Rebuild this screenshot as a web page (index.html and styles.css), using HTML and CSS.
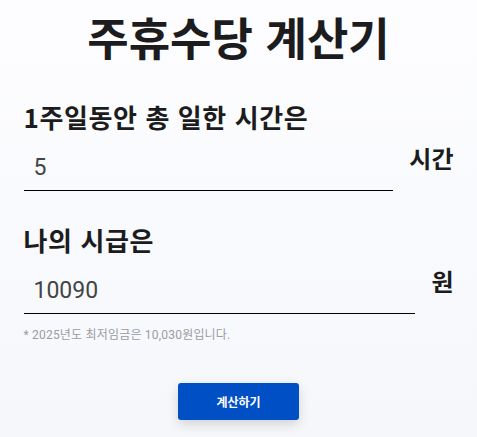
FILE: index.html
```html
<!DOCTYPE html>
<html lang="ko">
<head>
<meta charset="utf-8">
<title>주휴수당 계산기</title>
<link rel="stylesheet" href="styles.css">
</head>
<body>
<main class="calc">
  <h1 class="title">주휴수당 계산기</h1>
  <section class="field">
    <label class="label" for="hours">1주일동안 총 일한 시간은</label>
    <div class="row">
      <input class="input" id="hours" type="text" value="5">
      <span class="unit">시간</span>
    </div>
  </section>
  <section class="field">
    <label class="label" for="wage">나의 시급은</label>
    <div class="row">
      <input class="input" id="wage" type="text" value="10090">
      <span class="unit">원</span>
    </div>
    <p class="note">* 2025년도 최저임금은 10,030원입니다.</p>
  </section>
  <div class="actions">
    <button class="btn" type="button">계산하기</button>
  </div>
</main>
</body>
</html>
```
FILE: styles.css
```css
html, body {
  margin: 0;
  padding: 0;
}
body {
  min-height: 437px;
  background: linear-gradient(180deg, #fdfdff 0%, #f5f7fb 100%);
  font-family: Roboto, "Noto Sans CJK KR", sans-serif;
  color: #1e1e1e;
}
.calc {
  width: 430px;
  margin: 0 auto;
  padding-top: 6px;
  box-sizing: border-box;
}
.title {
  margin: 0;
  text-align: center;
  font-family: "Noto Sans CJK KR", sans-serif;
  font-weight: 700;
  font-size: 45px;
  line-height: 62px;
  color: #1c1c1e;
}
.field {
  margin-top: 34px;
}
.field + .field {
  margin-top: 32px;
}
.label {
  display: block;
  font-family: "Noto Sans CJK KR", sans-serif;
  font-weight: 700;
  font-size: 26px;
  letter-spacing: 0.6px;
  line-height: 30px;
  color: #1c1c1e;
}
.row {
  display: flex;
  align-items: center;
  gap: 16px;
  margin-top: 8px;
}
.input {
  flex: 1;
  min-width: 0;
  border: 0;
  border-bottom: 1px solid #000;
  background: transparent;
  font-family: Roboto, sans-serif;
  font-size: 23px;
  color: #444;
  padding: 13px 10px 9px;
  line-height: 26px;
  outline: none;
}
.unit {
  font-family: "Noto Sans CJK KR", sans-serif;
  font-weight: 700;
  font-size: 24px;
  color: #1c1c1e;
  padding-bottom: 18px;
}
.note {
  margin: 9px 0 0;
  font-size: 12px;
  letter-spacing: 0.2px;
  color: #9a9ca3;
}
.actions {
  display: flex;
  justify-content: center;
  margin-top: 41px;
}
.btn {
  width: 121px;
  height: 37px;
  border: 0;
  border-radius: 3px;
  background: #004fc4;
  color: #fff;
  font-family: "Noto Sans CJK KR", sans-serif;
  font-weight: 700;
  font-size: 12px;
  box-shadow: 0 4px 12px rgba(0, 0, 0, 0.15);
}
```
